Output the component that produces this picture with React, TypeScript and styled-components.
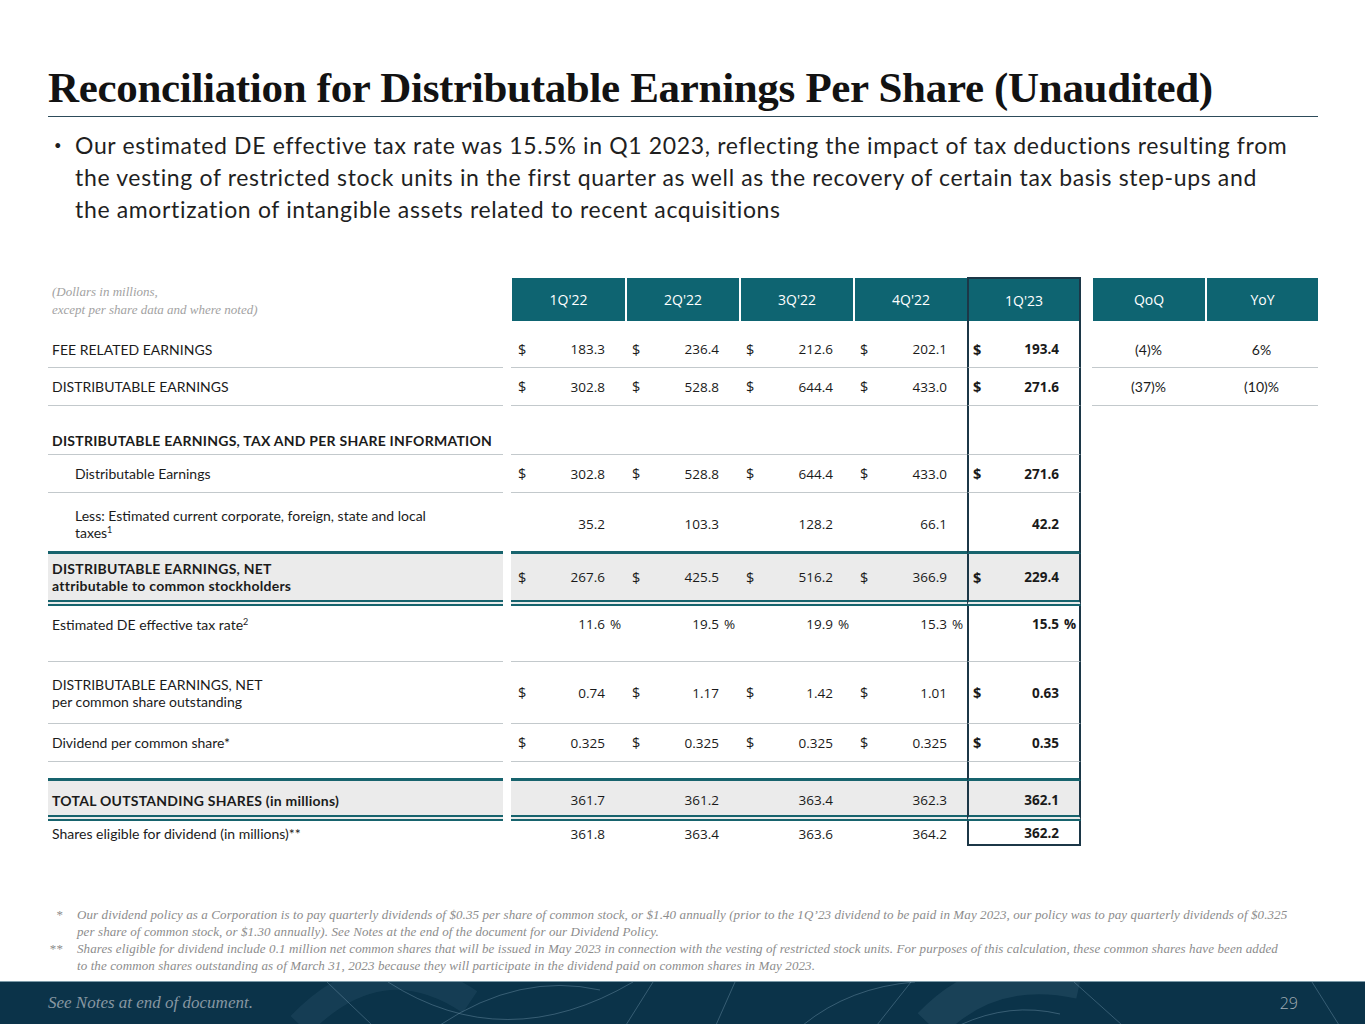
import React from 'react';
import styled, { createGlobalStyle, css } from 'styled-components';

const GlobalStyle = createGlobalStyle`
  html, body { margin: 0; padding: 0; background: #ffffff; }
  body { font-family: 'Lato', 'Open Sans', sans-serif; color: #1d1d1d; }
  * { box-sizing: border-box; }
`;

const TEAL = '#0e6471';
const LINE_TEAL = '#17636d';
const GRID = '#c3c9cc';
const BOX = '#1c3747';
const SHADE = '#ebebeb';

type Line = 'thin' | 'thick' | 'double' | 'none';

const borderFor = (l: Line) =>
  ({
    thin: `1px solid ${GRID}`,
    thick: `3px solid ${LINE_TEAL}`,
    double: `6px double ${LINE_TEAL}`,
    none: 'none',
  }[l]);

const Page = styled.div`
  width: 1365px;
  height: 1024px;
  display: flex;
  flex-direction: column;
  background: #fff;
  overflow: hidden;
`;

const Main = styled.main`
  flex: 1;
  padding: 64px 47px 0 48px;
`;

const Title = styled.h1`
  margin: 0;
  padding-bottom: 4px;
  border-bottom: 1px solid #2d4b5a;
  font-family: 'Liberation Serif', 'Times New Roman', serif;
  font-weight: 700;
  font-size: 43px;
  line-height: 48px;
  letter-spacing: -0.32px;
  color: #121212;
  white-space: nowrap;
`;

const BulletList = styled.ul`
  list-style: none;
  margin: 12px 0 0;
  padding: 0;
`;

const BulletItem = styled.li`
  display: flex;
  font-family: 'Lato', sans-serif;
  font-size: 23px;
  line-height: 32px;
  letter-spacing: 0.65px;
  color: #1f1f1f;
  white-space: nowrap;
`;

const Dot = styled.span`
  flex: none;
  width: 27px;
  padding-left: 6px;
  font-size: 13px;
`;

const Table = styled.div`
  margin-top: 52px;
  display: flex;
  flex-direction: column;
`;

const Row = styled.div<{ $h: number }>`
  display: flex;
  height: ${(p) => p.$h}px;
`;

type CellProps = { $line: Line; $shade?: boolean; $pt?: number; $pb?: number };

const cellBase = css<CellProps>`
  height: 100%;
  display: flex;
  align-items: center;
  border-bottom: ${(p) => borderFor(p.$line)};
  background: ${(p) => (p.$shade ? SHADE : 'transparent')};
  padding-top: ${(p) => p.$pt ?? 0}px;
  padding-bottom: ${(p) => p.$pb ?? 0}px;
`;

const LabelCell = styled.div<CellProps & { $indent?: boolean; $bold?: boolean }>`
  ${cellBase};
  flex: none;
  width: 455px;
  padding-left: ${(p) => (p.$indent ? 27 : 4)}px;
  font-family: 'Lato', sans-serif;
  font-size: 14px;
  line-height: 17px;
  font-weight: ${(p) => (p.$bold ? 700 : 400)};
  letter-spacing: ${(p) => (p.$bold ? 0.25 : 0)}px;
  color: #1b1b1b;
`;

const HeaderNote = styled.div`
  flex: none;
  width: 455px;
  display: flex;
  align-items: center;
  padding: 4px 0 0 4px;
  font-family: 'Liberation Serif', serif;
  font-style: italic;
  font-size: 13px;
  line-height: 18px;
  color: #a2a2a2;
`;

const DataGroup = styled.div`
  flex: none;
  margin-left: 8px;
  width: 570px;
  height: 100%;
  display: grid;
  grid-template-columns: repeat(5, 1fr);
`;

const ChangeGroup = styled.div`
  flex: none;
  margin-left: 11px;
  width: 226px;
  height: 100%;
  display: grid;
  grid-template-columns: 1fr 1fr;
`;

const HeaderCell = styled.div<{ $focus?: boolean; $first?: boolean }>`
  height: 100%;
  display: flex;
  align-items: center;
  justify-content: center;
  background: ${TEAL};
  color: #ffffff;
  font-family: 'Open Sans', sans-serif;
  font-size: 14px;
  border-top: ${(p) => (p.$focus ? `2px solid ${BOX}` : '1px solid #fff')};
  border-left: ${(p) => (p.$focus ? `2px solid ${BOX}` : p.$first ? '1px solid #fff' : '2px solid #fff')};
  border-right: ${(p) => (p.$focus ? `2px solid ${BOX}` : 'none')};
`;

const DataCell = styled.div<CellProps & { $focus?: boolean; $closed?: boolean }>`
  ${cellBase};
  padding-left: ${(p) => (p.$focus ? 4 : 7)}px;
  font-family: 'Open Sans', sans-serif;
  font-size: 13.5px;
  font-weight: ${(p) => (p.$focus ? 700 : 400)};
  color: #1a1a1a;
  ${(p) =>
    p.$focus &&
    css`
      border-left: 2px solid ${BOX};
      border-right: 2px solid ${BOX};
    `}
  ${(p) =>
    p.$closed &&
    css`
      border-bottom: 2px solid ${BOX};
    `}
`;

const Dollar = styled.span`
  flex: none;
  font-size: 14.5px;
`;

const Amount = styled.span`
  flex: 1;
  text-align: right;
`;

const Suffix = styled.span`
  flex: none;
  width: 20px;
  padding-left: 5px;
`;

const ChangeCell = styled.div<CellProps>`
  ${cellBase};
  justify-content: center;
  font-family: 'Lato', sans-serif;
  font-size: 14px;
  color: #1b1b1b;
`;

const Sup = styled.sup`
  font-size: 9px;
  line-height: 0;
  vertical-align: 5px;
`;

const Notes = styled.div`
  margin: 0 0 7px 48px;
  display: grid;
  grid-template-columns: 15px 1fr;
  column-gap: 14px;
  font-family: 'Liberation Serif', 'Times New Roman', serif;
  font-style: italic;
  font-size: 13px;
  line-height: 17px;
  letter-spacing: 0.1px;
  color: #8c8c8c;
  white-space: nowrap;
`;

const NoteMark = styled.span`
  text-align: right;
  font-style: normal;
`;

const Band = styled.footer`
  position: relative;
  flex: none;
  height: 43px;
  background: #0b3349;
  border-top: 1px solid #7d9aa8;
  display: flex;
  align-items: center;
  justify-content: space-between;
  padding: 0 67px 0 48px;
  overflow: hidden;
`;

const BandArt = styled.svg`
  position: absolute;
  left: 0;
  top: 0;
  pointer-events: none;
`;

const BandNote = styled.span`
  position: relative;
  font-family: 'Liberation Serif', serif;
  font-style: italic;
  font-size: 17px;
  color: #8797a2;
`;

const PageNum = styled.span`
  position: relative;
  font-family: 'Open Sans', sans-serif;
  font-weight: 300;
  font-size: 16px;
  color: #a3afb7;
`;

type Val = { d?: boolean; v: string; s?: string };

type RowDef = {
  label: React.ReactNode;
  h: number;
  line: Line;
  shade?: boolean;
  bold?: boolean;
  indent?: boolean;
  pt?: number;
  pb?: number;
  vals?: Val[];
  changes?: string[];
  closed?: boolean;
};

const $ = (v: string): Val => ({ d: true, v });
const n = (v: string): Val => ({ v });
const pct = (v: string): Val => ({ v, s: '%' });

const rows: RowDef[] = [
  {
    label: 'FEE RELATED EARNINGS',
    h: 47,
    pt: 10,
    line: 'thin',
    vals: [$('183.3'), $('236.4'), $('212.6'), $('202.1'), $('193.4')],
    changes: ['(4)%', '6%'],
  },
  {
    label: 'DISTRIBUTABLE EARNINGS',
    h: 38,
    line: 'thin',
    vals: [$('302.8'), $('528.8'), $('644.4'), $('433.0'), $('271.6')],
    changes: ['(37)%', '(10)%'],
  },
  {
    label: 'DISTRIBUTABLE EARNINGS, TAX AND PER SHARE INFORMATION',
    h: 49,
    pt: 20,
    line: 'thin',
    bold: true,
  },
  {
    label: 'Distributable Earnings',
    h: 38,
    line: 'thin',
    indent: true,
    vals: [$('302.8'), $('528.8'), $('644.4'), $('433.0'), $('271.6')],
  },
  {
    label: (
      <span>
        Less: Estimated current corporate, foreign, state and local
        <br />
        taxes<Sup>1</Sup>
      </span>
    ),
    h: 61,
    pt: 4,
    line: 'thick',
    indent: true,
    vals: [n('35.2'), n('103.3'), n('128.2'), n('66.1'), n('42.2')],
  },
  {
    label: (
      <span>
        DISTRIBUTABLE EARNINGS, NET
        <br />
        attributable to common stockholders
      </span>
    ),
    h: 52,
    line: 'double',
    shade: true,
    bold: true,
    vals: [$('267.6'), $('425.5'), $('516.2'), $('366.9'), $('229.4')],
  },
  {
    label: (
      <span>
        Estimated DE effective tax rate<Sup>2</Sup>
      </span>
    ),
    h: 56,
    pb: 19,
    line: 'thin',
    vals: [pct('11.6'), pct('19.5'), pct('19.9'), pct('15.3'), pct('15.5')],
  },
  {
    label: (
      <span>
        DISTRIBUTABLE EARNINGS, NET
        <br />
        per common share outstanding
      </span>
    ),
    h: 62,
    line: 'thin',
    vals: [$('0.74'), $('1.17'), $('1.42'), $('1.01'), $('0.63')],
  },
  {
    label: 'Dividend per common share*',
    h: 38,
    line: 'thin',
    vals: [$('0.325'), $('0.325'), $('0.325'), $('0.325'), $('0.35')],
  },
  {
    label: '',
    h: 19,
    line: 'thick',
  },
  {
    label: 'TOTAL OUTSTANDING SHARES (in millions)',
    h: 40,
    pt: 4,
    line: 'double',
    shade: true,
    bold: true,
    vals: [n('361.7'), n('361.2'), n('363.4'), n('362.3'), n('362.1')],
  },
  {
    label: 'Shares eligible for dividend (in millions)**',
    h: 25,
    line: 'none',
    closed: true,
    vals: [n('361.8'), n('363.4'), n('363.6'), n('364.2'), n('362.2')],
  },
];

const quarters = ["1Q'22", "2Q'22", "3Q'22", "4Q'22", "1Q'23"];

function FooterArt() {
  const stroke = 'rgba(150,185,205,0.32)';
  return (
    <BandArt width="1365" height="43" viewBox="0 0 1365 43">
      <path d="M300 43 Q 380 -40 470 20" fill="none" stroke="rgba(120,160,185,0.10)" strokeWidth="26" />
      <path d="M327 0 L 372 43" stroke={stroke} fill="none" />
      <path d="M388 0 Q 505 75 633 0" stroke={stroke} fill="none" />
      <path d="M440 43 Q 520 -10 600 8" stroke={stroke} fill="none" />
      <path d="M653 0 L 626 43" stroke={stroke} fill="none" />
      <path d="M735 0 L 716 43" stroke={stroke} fill="none" />
      <path d="M803 43 Q 850 5 915 0" stroke={stroke} fill="none" />
      <path d="M911 0 L 877 43" stroke={stroke} fill="none" />
      <path d="M930 43 Q 990 -20 1080 0" fill="none" stroke="rgba(120,160,185,0.13)" strokeWidth="34" />
      <path d="M960 43 Q 1010 20 1060 32" stroke={stroke} fill="none" />
      <path d="M1074 0 L 1122 43" stroke={stroke} fill="none" />
      <path d="M1312 0 L 1339 43" stroke={stroke} fill="none" />
    </BandArt>
  );
}

export default function App() {
  return (
    <>
      <GlobalStyle />
      <Page>
        <Main>
          <Title>Reconciliation for Distributable Earnings Per Share (Unaudited)</Title>
          <BulletList>
            <BulletItem>
              <Dot>•</Dot>
              <span>
                Our estimated DE effective tax rate was 15.5% in Q1 2023, reflecting the impact of tax deductions resulting from
                <br />
                the vesting of restricted stock units in the first quarter as well as the recovery of certain tax basis step-ups and
                <br />
                the amortization of intangible assets related to recent acquisitions
              </span>
            </BulletItem>
          </BulletList>

          <Table>
            <Row $h={44}>
              <HeaderNote>
                <span>
                  (Dollars in millions,
                  <br />
                  except per share data and where noted)
                </span>
              </HeaderNote>
              <DataGroup>
                {quarters.map((q, i) => (
                  <HeaderCell key={q} $first={i === 0} $focus={i === 4}>
                    {q}
                  </HeaderCell>
                ))}
              </DataGroup>
              <ChangeGroup>
                <HeaderCell $first>QoQ</HeaderCell>
                <HeaderCell>YoY</HeaderCell>
              </ChangeGroup>
            </Row>

            {rows.map((r, ri) => (
              <Row key={ri} $h={r.h}>
                <LabelCell
                  $line={r.line}
                  $shade={r.shade}
                  $bold={r.bold}
                  $indent={r.indent}
                  $pt={r.pt}
                  $pb={r.pb}
                >
                  {r.label}
                </LabelCell>
                <DataGroup>
                  {quarters.map((q, ci) => {
                    const v = r.vals?.[ci];
                    return (
                      <DataCell
                        key={q}
                        $line={r.line}
                        $shade={r.shade}
                        $pt={r.pt}
                        $pb={r.pb}
                        $focus={ci === 4}
                        $closed={r.closed && ci === 4}
                      >
                        {v && (
                          <>
                            <Dollar>{v.d ? '$' : ''}</Dollar>
                            <Amount>{v.v}</Amount>
                            <Suffix>{v.s ?? ''}</Suffix>
                          </>
                        )}
                      </DataCell>
                    );
                  })}
                </DataGroup>
                <ChangeGroup>
                  {[0, 1].map((ci) => (
                    <ChangeCell key={ci} $line={r.changes ? r.line : 'none'} $pt={r.pt}>
                      {r.changes?.[ci]}
                    </ChangeCell>
                  ))}
                </ChangeGroup>
              </Row>
            ))}
          </Table>
        </Main>

        <Notes>
          <NoteMark>*</NoteMark>
          <span>
            Our dividend policy as a Corporation is to pay quarterly dividends of $0.35 per share of common stock, or $1.40 annually (prior to the 1Q’23 dividend to be paid in May 2023, our policy was to pay quarterly dividends of $0.325
          </span>
          <span />
          <span>per share of common stock, or $1.30 annually). See Notes at the end of the document for our Dividend Policy.</span>
          <NoteMark>**</NoteMark>
          <span>
            Shares eligible for dividend include 0.1 million net common shares that will be issued in May 2023 in connection with the vesting of restricted stock units. For purposes of this calculation, these common shares have been added
          </span>
          <span />
          <span>
            to the common shares outstanding as of March 31, 2023 because they will participate in the dividend paid on common shares in May 2023.
          </span>
        </Notes>

        <Band>
          <FooterArt />
          <BandNote>See Notes at end of document.</BandNote>
          <PageNum>29</PageNum>
        </Band>
      </Page>
    </>
  );
}
